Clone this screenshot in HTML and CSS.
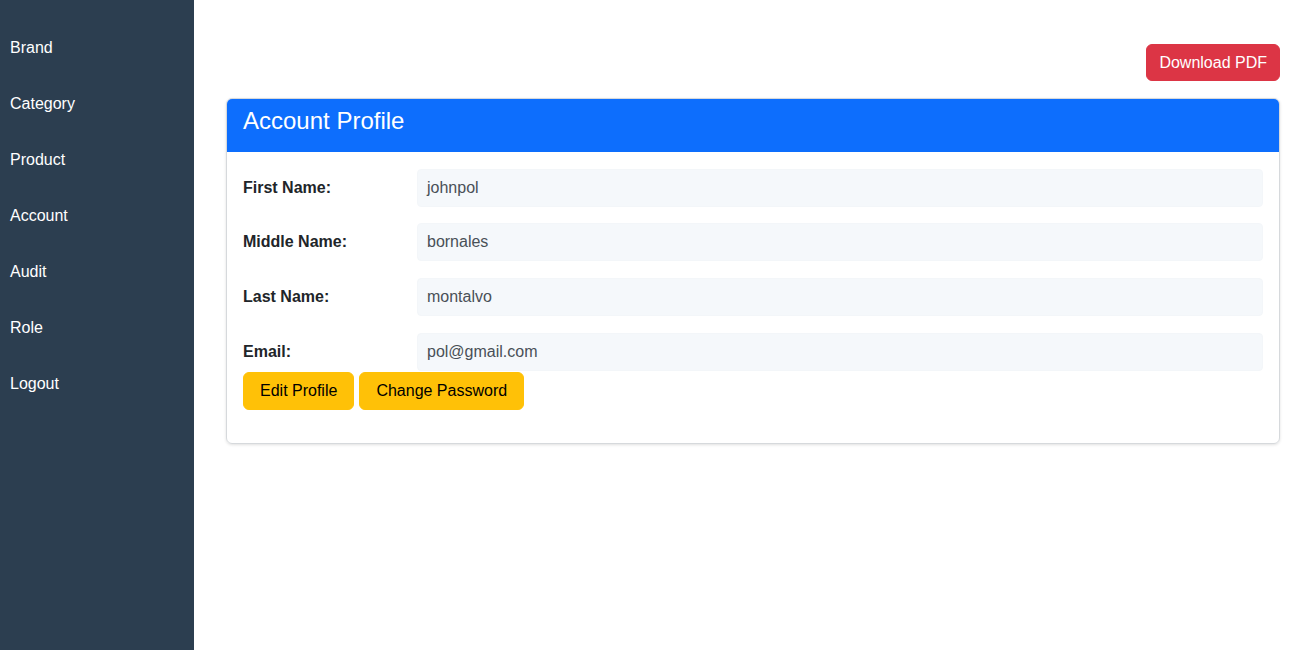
FILE: index.html
```html
<!DOCTYPE html>
<html lang="en">
<head>
<meta charset="utf-8">
<title>Account Profile</title>
<link rel="stylesheet" href="styles.css">
</head>
<body>
<div class="layout">
  <aside class="sidebar">
    <nav>
      <a class="nav-link" href="#">Brand</a>
      <a class="nav-link" href="#">Category</a>
      <a class="nav-link" href="#">Product</a>
      <a class="nav-link" href="#">Account</a>
      <a class="nav-link" href="#">Audit</a>
      <a class="nav-link" href="#">Role</a>
      <a class="nav-link" href="#">Logout</a>
    </nav>
  </aside>
  <main class="main">
    <div class="toolbar">
      <button class="btn btn-danger">Download PDF</button>
    </div>
    <section class="card">
      <header class="card-header">
        <h2 class="card-title">Account Profile</h2>
      </header>
      <div class="card-body">
        <div class="field">
          <label class="field-label">First Name:</label>
          <div class="field-value">johnpol</div>
        </div>
        <div class="field">
          <label class="field-label">Middle Name:</label>
          <div class="field-value">bornales</div>
        </div>
        <div class="field">
          <label class="field-label">Last Name:</label>
          <div class="field-value">montalvo</div>
        </div>
        <div class="field field-last">
          <label class="field-label">Email:</label>
          <div class="field-value">pol@gmail.com</div>
        </div>
        <div class="actions">
          <button class="btn btn-warning">Edit Profile</button>
          <button class="btn btn-warning">Change Password</button>
        </div>
      </div>
    </section>
  </main>
</div>
</body>
</html>
```

FILE: styles.css
```css
* { box-sizing: border-box; }

html, body {
  margin: 0;
  height: 100%;
}

body {
  font-family: "Liberation Sans", Arial, sans-serif;
  font-size: 16px;
  line-height: 1.5;
  color: #212529;
  background: #fff;
}

.layout {
  display: flex;
  min-height: 100vh;
}

.sidebar {
  width: 194px;
  flex: 0 0 194px;
  background: #2c3e50;
  padding-top: 20px;
}

.sidebar nav {
  display: flex;
  flex-direction: column;
}

.nav-link {
  display: block;
  padding: 16px 10px;
  line-height: 24px;
  color: #fff;
  text-decoration: none;
  font-size: 16px;
}

.main {
  flex: 1;
  padding: 44px 29px 0 32px;
}

.toolbar {
  display: flex;
  justify-content: flex-end;
  margin-bottom: 17px;
}

.btn {
  font-family: inherit;
  font-size: 16px;
  line-height: 24px;
  padding: 6px 12px;
  border: 1px solid transparent;
  border-radius: 6px;
  cursor: pointer;
}

.btn-danger {
  background: #dc3545;
  border-color: #dc3545;
  color: #fff;
  height: 37px;
  padding: 5px 12px;
}

.btn-warning {
  background: #ffc107;
  border-color: #ffc107;
  color: #000;
  padding: 6px 16px;
}

.card {
  border: 1px solid #d6d9dc;
  border-radius: 6px;
  box-shadow: 0 1px 3px rgba(0, 0, 0, 0.12);
  overflow: hidden;
}

.card-header {
  background: #0d6efd;
  color: #fff;
  padding: 8px 16px;
}

.card-title {
  margin: 0 0 8px;
  font-size: 24px;
  font-weight: 400;
  line-height: 1.2;
}

.card-body {
  padding: 17px 16px 17px;
}

.field {
  display: grid;
  grid-template-columns: calc((100% + 24px) / 6 - 24px) 1fr;
  column-gap: 24px;
  margin-bottom: 16.67px;
}

.field-last {
  margin-bottom: 0;
}

.field-label {
  font-weight: 700;
  color: #212529;
  padding-top: 7px;
  line-height: 24px;
}

.field-value {
  background: #f5f8fb;
  border: 1px solid #f3f6f9;
  border-radius: 4px;
  padding: 6px 9px;
  line-height: 24px;
  color: #495057;
}

.actions {
  display: flex;
  gap: 5px;
  margin-top: 1px;
  padding-bottom: 16px;
}
```
